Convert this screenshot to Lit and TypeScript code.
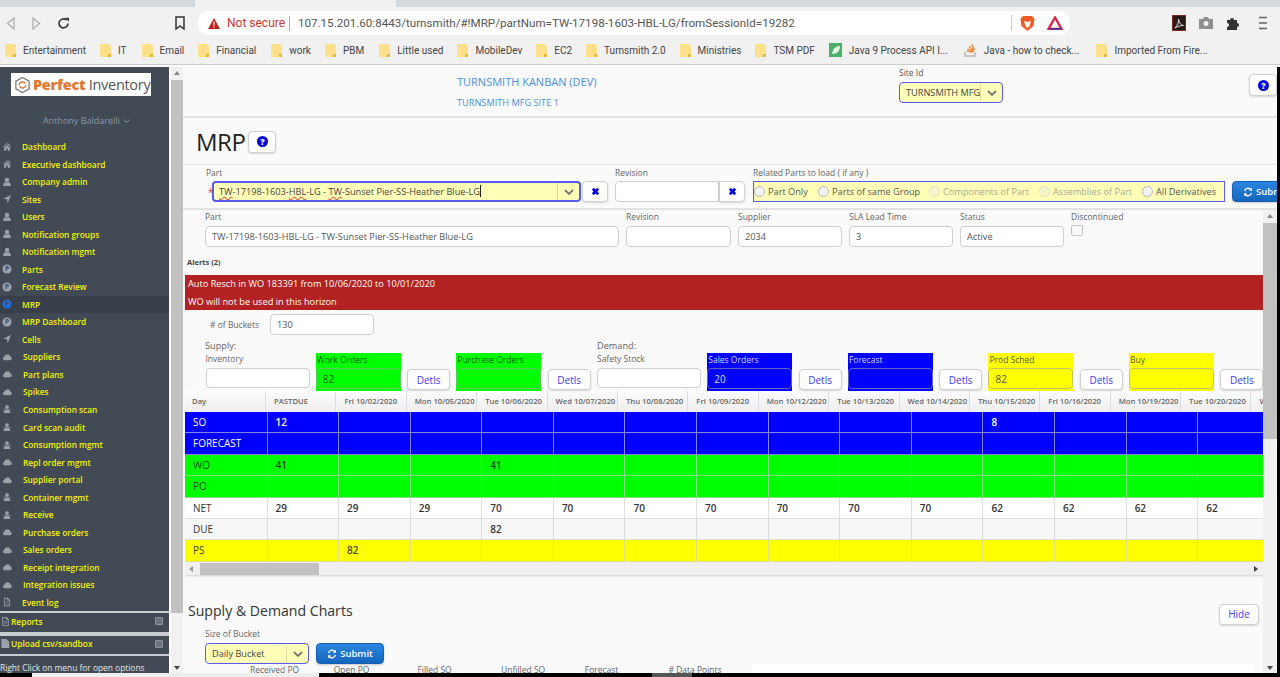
import { LitElement, html, css, svg } from "lit";
import { customElement } from "lit/decorators.js";

const I: Record<string, any> = {
  home: svg`<path d="M6 1.2 1 5.6l.6.7L6 2.5l4.4 3.8.6-.7-2-1.7V2H7.6v1.1zM2.4 6.8V10.6h2.7V7.8h1.8v2.8h2.7V6.8L6 3.7z"/>`,
  user: svg`<circle cx="6" cy="3.6" r="2.7"/><path d="M1.4 10.8c0-3 1.2-4.5 2.7-4.8.6.5 1.2.7 1.9.7s1.3-.2 1.9-.7c1.500.3 2.700 1.800 2.700 4.800z"/>`,
  arrow: svg`<path d="M11 1 1 6h4.800L6.800 11z"/>`,
  cloud: svg`<path d="M3 10h6.500a2.400 2.400 0 0 0 .6-4.700A3.300 3.300 0 0 0 5 3.300 2.300 2.300 0 0 0 3 5.500 2.300 2.300 0 0 0 3 10z"/>`,
  hat: svg`<circle cx="6" cy="3.800" r="2.300"/><path d="M1 6.200h10v.8H1zM2 10.800c0-2 1-3.300 2-3.500h4c1 .2 2 1.500 2 3.500z"/>`,
  file: svg`<path d="M2.500 1h4.500l2.500 2.500V11h-7zM3.500 2v8h5V4.200H6.300V2zM4.300 5.600h3.400v.7H4.300zM4.300 7.200h3.400v.7H4.300z" fill-rule="evenodd"/>`,
  doc: svg`<path d="M1.500 1H7l3 3v7H1.500z"/>`,
};

const MENU: [string, string, boolean?][] = [
  ["Dashboard", "home"], ["Executive dashboard", "home"], ["Company admin", "user"], ["Sites", "arrow"],
  ["Users", "user"], ["Notification groups", "user"], ["Notification mgmt", "user"], ["Parts", "p"],
  ["Forecast Review", "p"], ["MRP", "p"], ["MRP Dashboard", "p"], ["Cells", "arrow"],
  ["Suppliers", "cloud", true], ["Part plans", "cloud", true], ["Spikes", "cloud", true],
  ["Consumption scan", "hat", true], ["Card scan audit", "hat", true], ["Consumption mgmt", "hat", true],
  ["Repl order mgmt", "cloud", true], ["Supplier portal", "cloud", true], ["Container mgmt", "hat", true],
  ["Receive", "hat", true], ["Purchase orders", "cloud", true], ["Sales orders", "cloud", true],
  ["Receipt integration", "cloud", true], ["Integration issues", "cloud", true], ["Event log", "file"],
];

const BOOKMARKS: [string, string, number][] = [
  ["Entertainment", "f", 14], ["IT", "f", 15], ["Email", "f", 14], ["Financial", "f", 15], ["work", "f", 14],
  ["PBM", "f", 15], ["Little used", "f", 14], ["MobileDev", "f", 14], ["EC2", "f", 14], ["Turnsmith 2.0", "f", 14],
  ["Ministries", "f", 14], ["TSM PDF", "f", 14], ["Java 9 Process API I...", "g", 16], ["Java - how to check...", "s", 17],
  ["Imported From Fire...", "f", 0],
];

const HEAD = ["PASTDUE", "Fri 10/02/2020", "Mon 10/05/2020", "Tue 10/06/2020", "Wed 10/07/2020", "Thu 10/08/2020", "Fri 10/09/2020", "Mon 10/12/2020", "Tue 10/13/2020", "Wed 10/14/2020", "Thu 10/15/2020", "Fri 10/16/2020", "Mon 10/19/2020", "Tue 10/20/2020", "Wed 10/21/2020"];
const n = 15;
const row = (m: Record<number, string>) => Array.from({ length: n }, (_, i) => m[i] ?? "");
const ROWS: [string, string, string[]][] = [
  ["SO", "blue", row({ 0: "12", 10: "8" })],
  ["FORECAST", "blue", row({})],
  ["WO", "green", row({ 0: "41", 3: "41" })],
  ["PO", "green", row({})],
  ["NET", "white", row({ 0: "29", 1: "29", 2: "29", 3: "70", 4: "70", 5: "70", 6: "70", 7: "70", 8: "70", 9: "70", 10: "62", 11: "62", 12: "62", 13: "62" })],
  ["DUE", "grey", row({ 3: "82" })],
  ["PS", "yellow", row({ 1: "82" })],
];

const help = () => html`<button class="btn help"><svg width="11" height="11" viewBox="0 0 12 12"><circle cx="6" cy="6" r="6" fill="#0000e0"/><text x="6" y="9.300" font-size="9.500" font-weight="800" text-anchor="middle" fill="#fff" font-family="Open Sans">?</text></svg></button>`;
const cross = () => html`<button class="btn clear"><svg width="9" height="9" viewBox="0 0 10 10"><path d="M2 2l6 6M8 2 2 8" stroke="#0000e0" stroke-width="3"/></svg></button>`;
const chevron = () => html`<svg width="10" height="6" viewBox="0 0 10 6"><path d="M1 1l4 4 4-4" fill="none" stroke="#777" stroke-width="1.800"/></svg>`;
const refresh = () => html`<svg width="10" height="10" viewBox="0 0 12 12"><path d="M1.800 5A4.300 4.300 0 0 1 9.300 3M10.200 7A4.300 4.300 0 0 1 2.700 9" fill="none" stroke="#fff" stroke-width="1.600"/><path d="M10.800.8v3.700H7.100zM1.200 11.200V7.500h3.700z" fill="#fff"/></svg>`;

@customElement("app-root")
export class AppRoot extends LitElement {
  static styles = css`
    :host { display: block; width: 1280px; height: 677px; overflow: hidden; position: relative; font-family: "Open Sans", sans-serif; background: #fafafa; color: #555; }
    * { box-sizing: border-box; }
    button { font-family: inherit; padding: 0; margin: 0; }

    .tabs { height: 7px; background: #d6d9dc; display: flex; padding-left: 195px; }
    .tab { width: 201px; height: 7px; background: #f1f1f1; }
    .toolbar { height: 28px; padding-top: 4px; background: #f1f1f1; display: flex; align-items: center; position: relative; }
    .nav { width: 20px; display: flex; justify-content: center; margin-right: 6.500px; }
    .bookmark-icon { margin-right: 13px; display: flex; }
    .url { width: 872px; height: 24px; background: #fff; border-radius: 10px; display: flex; align-items: center; padding-left: 10px; font-family: Roboto, sans-serif; font-size: 11.600px; color: #555; }
    .notsec { color: #c8372d; margin-left: 7px; font-size: 12px; width: 55px; white-space: nowrap; }
    .sep { width: 1px; height: 15px; background: #aaa; margin: 0 8px 0 7px; }
    .url-text { width: 713px; white-space: nowrap; }
    .sep2 { margin: 0 8px 0 0; height: 16px; background: #ccc; }
    .ext { display: flex; align-items: center; gap: 12px; }
    .right-icons { display: flex; align-items: center; margin-left: 102px; gap: 13px; }
    .bookmarks { height: 30px; padding-top: 1px; background: #f1f1f1; border-bottom: 1px solid #ccc; display: flex; align-items: center; padding-left: 5px; font-family: Roboto, sans-serif; font-size: 10px; color: #444; }
    .bm { display: flex; align-items: center; gap: 7px; white-space: nowrap; }
    .gap-line { height: 2px; background: #fff; }

    .main { display: flex; height: 610px; }
    .side { width: 169px; background: #414a55; display: flex; flex-direction: column; flex: none; position: relative; }
    .logo-wrap { padding: 6px 0 0 11px; height: 43px; }
    .logo { width: 140px; height: 23px; background: #fff; display: flex; align-items: center; padding-left: 3px; gap: 2px; font-size: 14.500px; letter-spacing: -.3px; white-space: nowrap; color: #555; font-family: "Open Sans", sans-serif; }
    .logo b { color: #de7a35; font-weight: 800; }
    .uname { height: 22px; padding-left: 43px; color: #8896a8; font-size: 9px; line-height: 20px; display: flex; align-items: center; gap: 3px; }
    .menu { padding-top: 6px; }
    .item { height: 17.520px; display: flex; align-items: center; font-size: 8.300px; font-weight: 600; color: #f4f400; padding-left: 2px; white-space: nowrap; }
    .item.active { background: #393f4a; }
    .item svg { width: 10px; height: 10px; fill: #9aa1a9; flex: none; margin-right: 10px; }
    .item.shift svg { margin-right: 11px; }
    .block { border-top: 2px solid #c9cdd2; border-bottom: 2px solid #c9cdd2; height: 23px; padding: 0 6px 2px 0; display: flex; align-items: center; color: #f4f400; font-size: 8.400px; font-weight: 600; }
    .block.second { height: 22px; }
    .block span { flex: 1; }
    .block svg.ic { width: 11px; height: 11px; fill: #9aa1a9; flex: none; }
    .block .box { width: 8px; height: 8px; border: 1px solid #8c949d; background: #6b737d; border-radius: 1px; flex: none; }
    .side-note { font-size: 8.400px; color: #e6e6e6; margin-top: 6px; white-space: nowrap; }

    .vbar { width: 14px; flex: none; background: #f1f1f1; display: flex; flex-direction: column; align-items: center; padding: 0 2px; border-left: 2px solid #fff; }
    .vbar.inner-bar { border-left: 0; }
    .arrow-up, .arrow-down { width: 0; height: 0; border-left: 3.500px solid transparent; border-right: 3.500px solid transparent; flex: none; }
    .arrow-up { border-bottom: 4px solid #888; margin-top: 4px; margin-bottom: 5px; }
    .arrow-down { border-top: 4px solid #444; margin-top: auto; margin-bottom: 7px; }
    .thumb { background: #c1c1c1; align-self: stretch; margin: 0 -2px; height: 533px; }
    .inner-bar .thumb { height: 216px; }

    .content { width: 1094px; flex: none; overflow: hidden; display: flex; flex-direction: column; }
    .black { width: 3px; background: #000; flex: none; }

    .top { height: 51px; border-bottom: 2px solid #e3e3e3; display: flex; padding-left: 274px; flex: none; }
    .titles { width: 442px; color: #4a8fdc; font-size: 11px; padding-top: 7px; }
    .titles div + div { font-size: 9.200px; margin-top: 7px; }
    .site { width: 350px; font-size: 8.500px; line-height: 11px; }
    .site .sel { margin-top: 4px; width: 105px; }
    .top .help { margin-top: 7px; }

    .btn { background: #fff; border: 1px solid #d0d0d0; border-radius: 4px; box-shadow: 0 1px 2px rgba(0,0,0,.15); display: inline-flex; align-items: center; justify-content: center; color: #3c3cff; font-size: 10px; }
    .help { width: 28px; height: 22px; flex: none; }
    .mrp { height: 47px; border-bottom: 1px solid #e3e3e3; display: flex; align-items: center; padding-left: 13px; gap: 3px; flex: none; }
    h1 { margin: 0; font-weight: 400; font-size: 24px; color: #222; letter-spacing: -.5px; }
    .mrp .help { margin-top: 1px; }

    .part-row { height: 45px; border-bottom: 2px solid #e3e3e3; display: flex; padding-top: 2px; flex: none; position: relative; }
    .lab { font-size: 8.500px; line-height: 12px; color: #666; white-space: nowrap; }
    .control { height: 21px; border: 1px solid #d0d0d0; border-radius: 4px; background: #fff; display: flex; align-items: center; font-size: 9.200px; padding-left: 6px; color: #555; white-space: nowrap; }
    .f-part { width: 432px; padding-left: 23px; flex: none; }
    .f-part .lab { margin-bottom: 2px; }
    .part-line { display: flex; align-items: center; }
    .req { color: #e33; font-size: 10px; width: 4px; margin-left: 2px; line-height: 10px; }
    .sel { height: 21px; background: #ffffb8; border: 2px solid #5a5af0; border-radius: 4px; display: flex; align-items: center; font-size: 9.200px; color: #444; white-space: nowrap; }
    .sel .val { flex: 1; padding-left: 5px; line-height: 17px; overflow: hidden; }
    .sel .chev { width: 22px; height: 17px; border-left: 1px solid #dcdca0; display: flex; align-items: center; justify-content: center; flex: none; }
    .sel.main-sel { width: 369px; }
    .sel.thin { border-width: 1.500px; width: 104px; }
    .sel.thin .val { padding-left: 6px; }
    u.sp { text-decoration: underline wavy #d22; text-decoration-thickness: 1px; text-underline-offset: 1px; }
    .caret { display: inline-block; width: 1px; height: 12px; background: #222; vertical-align: -2px; }
    .clear { width: 26px; height: 21px; flex: none; margin-left: 1px; }
    .f-rev { width: 138px; flex: none; }
    .f-rev .lab { margin-bottom: 2px; }
    .rev-line { display: flex; }
    .rev-line .control { width: 104px; border-radius: 4px 0 0 4px; }
    .rev-line .clear { margin-left: 0; border-radius: 0 4px 4px 0; }
    .f-rel { width: 479px; flex: none; }
    .f-rel .lab { margin-bottom: 2px; }
    .radios { width: 472px; height: 21px; background: #ffffb8; border: 1px solid #5a5af0; display: flex; align-items: center; font-size: 9.200px; color: #555; white-space: nowrap; }
    .radio { display: flex; align-items: center; gap: 3px; flex: none; }
    .radio i { width: 11px; height: 11px; border-radius: 50%; border: 1px solid #bbb; background: #f3f3f3; flex: none; }
    .radio.off { color: #a8a890; }
    .radio.off i { border-color: #dfdfc0; background: #f6f6cc; }
    .submit { background: linear-gradient(#2a86e0, #1566bd); color: #fff; border: 1px solid #1560b5; border-radius: 4px; font-weight: 600; font-size: 9.500px; display: flex; align-items: center; justify-content: center; gap: 3px; white-space: nowrap; box-shadow: 0 1px 2px rgba(0,0,0,.2); }
    .part-row .submit { width: 70px; height: 21px; margin-top: 14px; flex: none; justify-content: flex-start; padding-left: 10px; }

    .scroller { flex: 1; display: flex; min-height: 0; }
    .inner { width: 1080px; flex: none; overflow: hidden; }
    .detail { display: flex; padding-left: 22px; gap: 7px; height: 47px; }
    .detail .lab { margin-bottom: 3px; line-height: 13px; }
    .detail .control { width: 104px; }
    .detail .control.wide { width: 414px; }
    .detail .control.rev { width: 105px; }
    .chk { width: 12px; height: 11px; border: 1px solid #c4c4c4; background: #f8f8f8; border-radius: 2px; margin-top: -1px; }
    .alerts { font-size: 7.500px; font-weight: 700; color: #444; margin: 0 0 7px 4px; line-height: 11px; }
    .banner { margin-left: 2px; width: 1078px; height: 35px; background: #b22222; color: #fff; font-size: 9.200px; line-height: 17.500px; padding-left: 3px; }
    .buckets { display: flex; align-items: center; margin-top: 4px; padding-left: 27px; }
    .buckets .lab { width: 60px; }
    .buckets .control { width: 104px; }
    .sd { display: flex; padding-left: 22px; margin-top: 5px; font-size: 9.200px; line-height: 12px; color: #666; height: 13px; }
    .sd span { width: 392px; }
    .fields { display: flex; padding-left: 22.500px; height: 38px; gap: 6.300px; }
    .fld { width: 104px; flex: none; }
    .fld .lab { margin-bottom: 4px; line-height: 11px; }
    .fld .control { background: #fff; height: 20px; margin-top: 1px; }
    .cf { width: 85px; flex: none; height: 38px; }
    .cf .lab { padding-left: 1px; line-height: 13px; height: 15px; }
    .cf .control { height: 21px; background: transparent; padding-left: 6px; font-size: 10px; border-color: rgba(160,160,160,.6); }
    .cf.g { background: #00ff00; }
    .cf.g .lab, .cf.g .control { color: #0a5d0a; }
    .cf.b { background: #0000ff; }
    .cf.b .lab, .cf.b .control { color: #d8d8ff; }
    .cf.y { background: #ffff00; }
    .cf.y .lab, .cf.y .control { color: #555; }
    .det { width: 43px; height: 21px; flex: none; margin-top: 16px; }

    .table { margin-left: 2px; width: 1078px; overflow: hidden; border-bottom: 1px solid #ddd; height: 185px; box-shadow: 0 1px 1px rgba(0,0,0,.06); }
    .thead { display: flex; height: 21px; background: linear-gradient(#fcfcfc, #eee); }
    .th { flex: none; width: 70.400px; padding-left: 8px; border-right: 1px solid #ddd; font-size: 7.700px; font-weight: 600; color: #666; line-height: 21px; overflow: hidden; white-space: nowrap; padding-right: 5px; }
    .th.first { width: 81px; padding-left: 7px; }
    .tr { display: flex; height: 21.400px; }
    .td { flex: none; width: 71.600px; border-right: 1px solid rgba(205,205,205,.65); border-bottom: 1px solid rgba(205,205,205,.65); font-size: 10px; font-weight: 600; line-height: 20px; padding-left: 8px; }
    .td.first { width: 82.500px; font-weight: 400; }
    .tr.blue { background: #0000ff; color: #fff; }
    .tr.green { background: #00ff00; color: #0d4a0d; }
    .tr.white { background: #fff; color: #333; }
    .tr.grey { background: #f7f7f7; color: #333; }
    .tr.yellow { background: #ffff00; color: #444; }
    .hscroll { height: 14px; background: #f0f0f0; display: flex; align-items: center; padding-left: 4px; }
    .hthumb { width: 119px; height: 12px; background: #c1c1c1; margin-left: 7px; }
    .al, .ar { width: 0; height: 0; border-top: 3.500px solid transparent; border-bottom: 3.500px solid transparent; flex: none; }
    .al { border-right: 4px solid #999; }
    .ar { border-left: 4px solid #444; margin-left: auto; margin-right: 5px; }

    .charts-head { display: flex; justify-content: space-between; padding: 0 4px 0 5px; margin-top: 26px; height: 24px; align-items: center; }
    h2 { margin: -8px 0 0; font-weight: 400; font-size: 14.100px; color: #333; }
    .hide { width: 40px; height: 21px; }
    .bucket { padding-left: 22px; margin-top: 1px; }
    .bucket .lab { margin-bottom: 3px; line-height: 13px; }
    .bucket-line { display: flex; gap: 7px; }
    .bucket .submit { width: 68px; height: 21px; }
    .legend { display: flex; padding-left: 67px; height: 12px; font-size: 8.500px; line-height: 12px; color: #666; }
    .legend span { width: 83.700px; flex: none; white-space: nowrap; }
    .legend .plot { width: 502px; height: 12px; background: #fff; }

    .osbar { position: absolute; left: 0; bottom: 0; width: 1280px; height: 4px; background: #000; display: flex; }
    .osbar .l { margin-left: 32px; width: 287px; background: #eee; }
    .osbar .m { margin-left: 333px; width: 40px; background: #555; }
  `;

  private rad(label: string, width: number, off = false) {
    return html`<span class="radio ${off ? "off" : ""}" style="width:${width}px"><i></i>${label}</span>`;
  }

  private folder(k: string) {
    if (k === "g") return html`<svg width="13" height="14" viewBox="0 0 13 14"><rect width="13" height="14" fill="#4caf6a"/><path d="M3 11C4 5 7 3 11 3c0 5-3 8-8 8z" fill="#e8f5e9"/></svg>`;
    if (k === "s") return html`<svg width="13" height="14" viewBox="0 0 13 14"><path d="M1 9v4h10V9" fill="none" stroke="#bbb" stroke-width="1.500"/><path d="M3 8l6 1M3.500 6l6 2M5 3.500l5 4M7.500 1l3 5.500" stroke="#f48024" stroke-width="1.300"/></svg>`;
    return html`<svg width="11" height="15" viewBox="0 0 11 15"><path d="M0 2a1 1 0 0 1 1-1h8l2 2v11H1a1 1 0 0 1-1-1z" fill="#ffe08a"/><path d="M8 11h3v3H8z" fill="#e8b93f"/></svg>`;
  }

  render() {
    return html`
      <div class="tabs"><div class="tab"></div></div>
      <div class="toolbar">
        <span class="nav"><svg width="9" height="13" viewBox="0 0 9 13"><path d="M8 1 1.500 6.500 8 12z" fill="none" stroke="#aaa" stroke-width="1.200"/></svg></span>
        <span class="nav"><svg width="9" height="13" viewBox="0 0 9 13"><path d="M1 1l6.500 5.500L1 12z" fill="none" stroke="#aaa" stroke-width="1.200"/></svg></span>
        <span class="nav"><svg width="13" height="13" viewBox="0 0 13 13"><path d="M11 6.500A4.500 4.500 0 1 1 9.500 3" fill="none" stroke="#333" stroke-width="1.600"/><path d="M8 .8h4v4z" fill="#333"/></svg></span>
        <span class="bookmark-icon" style="margin-left:95.500px"><svg width="10" height="14" viewBox="0 0 10 14"><path d="M1 1h8v12L5 10l-4 3z" fill="none" stroke="#333" stroke-width="1.500"/></svg></span>
        <div class="url">
          <svg width="12" height="11" viewBox="0 0 12 11"><path d="M6 0l6 11H0z" fill="#c5221f"/><path d="M5.400 3.500h1.200v4H5.400zM5.400 8.300h1.200v1.200H5.400z" fill="#fff"/></svg>
          <span class="notsec">Not secure</span><span class="sep"></span>
          <span class="url-text">107.15.201.60:8443/turnsmith/#!MRP/partNum=TW-17198-1603-HBL-LG/fromSessionId=19282</span>
          <span class="sep sep2"></span>
          <span class="ext">
            <svg width="15" height="17" viewBox="0 0 15 17"><path d="M3 1h9l2.500 3-1 7L7.500 16 1.500 11l-1-7z" fill="#f15a22"/><path d="M4 6l3.500 1L11 6l-1.500 5-2 2-2-2z" fill="#fff"/></svg>
            <svg width="16" height="14" viewBox="0 0 16 14"><path d="M8 1.500 14.500 13h-13z" fill="none" stroke="#e0234e" stroke-width="2.400"/><path d="M2 13h12" stroke="#662d91" stroke-width="2"/></svg>
          </span>
        </div>
        <div class="right-icons">
          <svg width="14" height="16" viewBox="0 0 14 16"><rect width="14" height="16" fill="#2a1a1a" stroke="#c33" /><path d="M3 13c3-3 4-7 3.500-9 1 4 2 6 5 6.500-3 0-5 .5-8.500 2.500z" fill="none" stroke="#ddd"/></svg>
          <svg width="14" height="12" viewBox="0 0 14 12"><path d="M0 2h4l1-2h4l1 2h4v10H0z" fill="#8f8f8f"/><circle cx="7" cy="6.500" r="2.500" fill="#f1f1f1"/></svg>
          <svg width="14" height="14" viewBox="0 0 14 14"><path d="M1 4h3a2 2 0 1 1 4 0h3v3a2 2 0 1 1 0 4v3H1v-3a2 2 0 1 0 0-4z" fill="#333"/></svg>
          <svg width="8" height="14" viewBox="0 0 8 14" style="margin-left:6px"><path d="M0 1.500h8M0 7h8M0 12.500h8" stroke="#666" stroke-width="1.500"/></svg>
        </div>
      </div>
      <div class="bookmarks">
        ${BOOKMARKS.map(([t, k, m]) => html`<span class="bm" style="margin-right:${m}px">${this.folder(k)}<span>${t}</span></span>`)}
      </div>
      <div class="gap-line"></div>
      <div class="main">
        <nav class="side">
          <div class="logo-wrap">
            <div class="logo">
              <svg width="17" height="18" viewBox="0 0 18 18"><path d="M9 1l7 4v8l-7 4-7-4V5z" fill="none" stroke="#777" stroke-width="1.300"/><path d="M5.500 9A3.500 3.500 0 0 1 12 7.500M12.500 9A3.500 3.500 0 0 1 6 10.500" fill="none" stroke="#de7a35" stroke-width="1.500"/></svg>
              <span><b>Perfect</b> Inventory</span>
            </div>
          </div>
          <div class="uname">Anthony Baldarelli <svg width="7" height="5" viewBox="0 0 7 5"><path d="M.5.500 3.500 3.500 6.500.500" fill="none" stroke="#8896a8"/></svg></div>
          <div class="menu">
            ${MENU.map(([t, ic, shift]) => html`
              <div class="item ${t === "MRP" ? "active" : ""} ${shift ? "shift" : ""}">
                <svg viewBox="0 0 12 12">
                  ${ic === "p"
                    ? svg`<circle cx="6" cy="6" r="5.500" fill=${t === "MRP" ? "#1f6fd6" : "#9aa1a9"}/><text x="6" y="8.800" font-size="8" font-weight="700" text-anchor="middle" font-family="Open Sans" fill="#414a55">P</text>`
                    : I[ic]}
                </svg>${t}
              </div>`)}
          </div>
          <div class="block"><svg class="ic" viewBox="0 0 12 12">${I.file}</svg><span class="t">Reports</span><i class="box"></i></div>
          <div class="block second"><svg class="ic" viewBox="0 0 12 12">${I.doc}</svg><span class="t">Upload csv/sandbox</span><i class="box"></i></div>
          <div class="side-note">Right Click on menu for open options</div>
        </nav>
        <div class="vbar">
          <i class="arrow-up"></i><div class="thumb"></div><i class="arrow-down"></i>
        </div>
        <div class="content">
          <div class="top">
            <div class="titles"><div>TURNSMITH KANBAN (DEV)</div><div>TURNSMITH MFG SITE 1</div></div>
            <div class="site">Site Id
              <div class="sel thin"><span class="val">TURNSMITH MFG</span><span class="chev">${chevron()}</span></div>
            </div>
            ${help()}
          </div>
          <div class="mrp"><h1>MRP</h1>${help()}</div>
          <div class="part-row">
            <div class="f-part">
              <div class="lab">Part</div>
              <div class="part-line">
                <span class="req">*</span>
                <div class="sel main-sel"><span class="val"><u class="sp">TW</u>-17198-1603-<u class="sp">HBL</u>-LG - <u class="sp">TW</u>-Sunset Pier-SS-Heather Blue-LG<i class="caret"></i></span><span class="chev">${chevron()}</span></div>
                ${cross()}
              </div>
            </div>
            <div class="f-rev">
              <div class="lab">Revision</div>
              <div class="rev-line"><div class="control"></div>${cross()}</div>
            </div>
            <div class="f-rel">
              <div class="lab">Related Parts to load ( if any )</div>
              <div class="radios">
                ${this.rad("Part Only", 64)}${this.rad("Parts of same Group", 111)}${this.rad("Components of Part", 110, true)}${this.rad("Assemblies of Part", 103, true)}${this.rad("All Derivatives", 80)}
              </div>
            </div>
            <button class="submit">${refresh()} Submit</button>
          </div>
          <div class="scroller">
            <div class="inner">
              <div class="detail">
                <div><div class="lab">Part</div><div class="control wide">TW-17198-1603-HBL-LG - TW-Sunset Pier-SS-Heather Blue-LG</div></div>
                <div><div class="lab">Revision</div><div class="control rev"></div></div>
                <div><div class="lab">Supplier</div><div class="control">2034</div></div>
                <div><div class="lab">SLA Lead Time</div><div class="control">3</div></div>
                <div><div class="lab">Status</div><div class="control">Active</div></div>
                <div><div class="lab">Discontinued</div><div class="chk"></div></div>
              </div>
              <div class="alerts">Alerts (2)</div>
              <div class="banner"><div>Auto Resch in WO 183391 from 10/06/2020 to 10/01/2020</div><div>WO will not be used in this horizon</div></div>
              <div class="buckets"><span class="lab"># of Buckets</span><div class="control">130</div></div>
              <div class="sd"><span>Supply:</span><span>Demand:</span></div>
              <div class="fields">
                <div class="fld"><div class="lab">Inventory</div><div class="control"></div></div>
                <div class="cf g"><div class="lab">Work Orders</div><div class="control">82</div></div>
                <button class="btn det">Detls</button>
                <div class="cf g"><div class="lab">Purchase Orders</div><div class="control"></div></div>
                <button class="btn det">Detls</button>
                <div class="fld"><div class="lab">Safety Stock</div><div class="control"></div></div>
                <div class="cf b"><div class="lab">Sales Orders</div><div class="control">20</div></div>
                <button class="btn det">Detls</button>
                <div class="cf b"><div class="lab">Forecast</div><div class="control"></div></div>
                <button class="btn det">Detls</button>
                <div class="cf y"><div class="lab">Prod Sched</div><div class="control">82</div></div>
                <button class="btn det">Detls</button>
                <div class="cf y"><div class="lab">Buy</div><div class="control"></div></div>
                <button class="btn det">Detls</button>
              </div>
              <div class="table">
                <div class="thead"><div class="th first">Day</div>${HEAD.map((h) => html`<div class="th">${h}</div>`)}</div>
                ${ROWS.map(([l, c, v]) => html`<div class="tr ${c}"><div class="td first">${l}</div>${v.map((x) => html`<div class="td">${x}</div>`)}</div>`)}
                <div class="hscroll"><i class="al"></i><div class="hthumb"></div><i class="ar"></i></div>
              </div>
              <div class="charts-head"><h2>Supply &amp; Demand Charts</h2><button class="btn hide">Hide</button></div>
              <div class="bucket">
                <div class="lab">Size of Bucket</div>
                <div class="bucket-line">
                  <div class="sel thin"><span class="val">Daily Bucket</span><span class="chev">${chevron()}</span></div>
                  <button class="submit">${refresh()} Submit</button>
                </div>
              </div>
              <div class="legend"><span>Received PO</span><span>Open PO</span><span>Filled SO</span><span>Unfilled SO</span><span>Forecast</span><span># Data Points</span><div class="plot"></div></div>
            </div>
            <div class="vbar inner-bar">
              <i class="arrow-up"></i><div class="thumb"></div><i class="arrow-down"></i>
            </div>
          </div>
        </div>
        <div class="black"></div>
      </div>
      <div class="osbar"><div class="l"></div><div class="m"></div></div>
    `;
  }
}
